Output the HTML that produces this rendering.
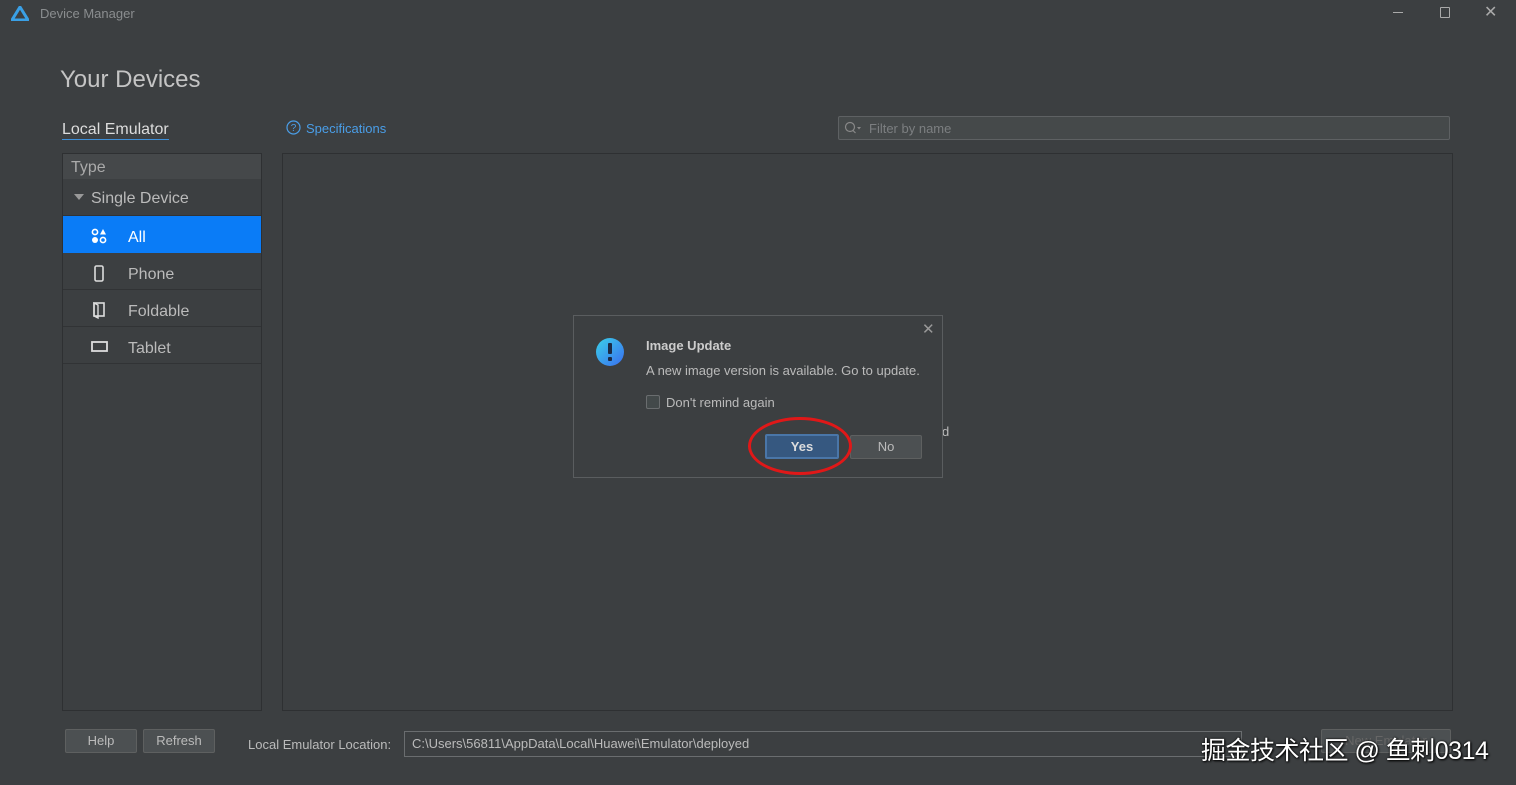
<!DOCTYPE html>
<html><head><meta charset="utf-8"><style>
*{box-sizing:border-box;margin:0;padding:0}
body{width:1516px;height:785px;background:#3c3f41;font-family:"Liberation Sans","Noto Sans CJK SC",sans-serif;position:relative;overflow:hidden;color:#bbb}
.a{position:absolute}
.row{position:absolute;left:63px;width:198px;height:37px;border-bottom:1px solid #313335;font-size:16px;color:#bbb}
.row span{position:absolute;left:65px;top:13px}
.row svg{position:absolute;left:28px;top:12px}
.btn{position:absolute;height:24px;border:1px solid #5e6060;background:#4c5052;border-radius:2px;font-size:13px;color:#bbb;text-align:center;line-height:22px}
</style></head><body>
<svg class="a" style="left:11px;top:6px" width="18" height="15" viewBox="0 0 18 15"><path d="M9 1 L17 14 H1 Z" fill="none" stroke="#3aa0e6" stroke-width="3"/></svg>
<div class="a" style="left:40px;top:6px;font-size:13px;color:#8a8d8f">Device Manager</div>
<div class="a" style="left:1393px;top:12px;width:10px;height:1px;background:#aaa"></div>
<div class="a" style="left:1440px;top:7px;width:10px;height:11px;border:1px solid #aaa;border-radius:1px"></div>
<div class="a" style="left:1484px;top:2px;font-size:16px;color:#aaa">✕</div>

<div class="a" style="left:60px;top:66px;font-size:24px;color:#c4c4c4">Your Devices</div>
<div class="a" style="left:62px;top:121px;font-size:16px;color:#ddd;border-bottom:1px solid #3d8fd9;padding-bottom:0px">Local Emulator</div>
<svg class="a" style="left:286px;top:120px" width="15" height="15" viewBox="0 0 15 15"><circle cx="7.5" cy="7.5" r="6.5" fill="none" stroke="#4a9ee8" stroke-width="1.2"/><text x="7.5" y="11" font-size="10" text-anchor="middle" fill="#4a9ee8" font-family="Liberation Sans">?</text></svg>
<div class="a" style="left:306px;top:121px;font-size:13px;color:#4a9ee8">Specifications</div>

<div class="a" style="left:838px;top:116px;width:612px;height:24px;border:1px solid #5e6163;background:#45494a;border-radius:2px"></div>
<svg class="a" style="left:844px;top:121px" width="18" height="14" viewBox="0 0 18 14"><circle cx="6" cy="6" r="4.5" fill="none" stroke="#888" stroke-width="1.2"/><path d="M9 9.5 L11.5 12" stroke="#888" stroke-width="1.2"/><path d="M13 6 L17 6 L15 8.5Z" fill="#888"/></svg>
<div class="a" style="left:869px;top:121px;font-size:13px;color:#7c7f81">Filter by name</div>

<div class="a" style="left:62px;top:153px;width:200px;height:558px;border:1px solid #2e3032"></div>
<div class="a" style="left:63px;top:154px;width:198px;height:25px;background:#45484a;font-size:16px;color:#aaa;padding:5px 0 0 8px">Type</div>
<div class="row" style="top:179px"><svg style="left:11px;top:15px" width="10" height="7"><path d="M0 0H10L5 6Z" fill="#999"/></svg><span style="left:28px;top:11px">Single Device</span></div>
<div class="row" style="top:216px;background:#0a7cf7;border:none;color:#fff"><svg width="16" height="16" viewBox="0 0 16 16"><circle cx="4" cy="4" r="2.6" fill="none" stroke="#fff" stroke-width="1.6"/><path d="M12 1 L15 6.5H9Z" fill="#fff"/><circle cx="4" cy="12" r="3" fill="#fff"/><circle cx="12" cy="12" r="2.6" fill="none" stroke="#fff" stroke-width="1.6"/></svg><span style="color:#fff">All</span></div>
<div class="row" style="top:253px"><svg width="16" height="18" viewBox="0 0 16 18"><rect x="4" y="1" width="8" height="15" rx="1.5" fill="none" stroke="#ddd" stroke-width="1.6"/></svg><span>Phone</span></div>
<div class="row" style="top:290px"><svg width="16" height="18" viewBox="0 0 16 18"><rect x="3" y="1" width="10" height="13" fill="none" stroke="#ddd" stroke-width="1.6"/><path d="M3 1 L7 3 V16 L3 14Z" fill="none" stroke="#ddd" stroke-width="1.4"/></svg><span>Foldable</span></div>
<div class="row" style="top:327px"><svg width="18" height="16" viewBox="0 0 18 16"><rect x="1" y="3" width="15" height="9" fill="none" stroke="#ddd" stroke-width="1.8"/></svg><span>Tablet</span></div>

<div class="a" style="left:282px;top:153px;width:1171px;height:558px;border:1px solid #2e3032"></div>
<div class="a" style="left:942px;top:424px;font-size:13px;color:#bbb">d</div>

<div class="a" style="left:573px;top:315px;width:370px;height:163px;border:1px solid #5a5d5f;background:#3c3f41"></div>
<div class="a" style="left:922px;top:320px;font-size:15px;color:#999">✕</div>
<div class="a" style="left:596px;top:338px;width:28px;height:28px;border-radius:50%;background:linear-gradient(135deg,#3ad0e8,#3a6ef0)"></div>
<div class="a" style="left:608px;top:343px;width:4px;height:11px;background:#1c2a44;border-radius:1px"></div>
<div class="a" style="left:608px;top:357px;width:4px;height:4px;background:#1c2a44;border-radius:1px"></div>
<div class="a" style="left:646px;top:338px;font-size:13px;font-weight:bold;color:#ccc">Image Update</div>
<div class="a" style="left:646px;top:363px;font-size:13px;color:#bbb">A new image version is available. Go to update.</div>
<div class="a" style="left:646px;top:395px;width:14px;height:14px;border:1px solid #6a6d6f;background:#43494a;border-radius:2px"></div>
<div class="a" style="left:666px;top:395px;font-size:13px;color:#bbb">Don't remind again</div>
<div class="btn" style="left:765px;top:434px;width:74px;height:25px;background:#365880;border:2px solid #4a76a8;color:#ddd;font-weight:bold">Yes</div>
<div class="btn" style="left:850px;top:435px;width:72px;height:24px">No</div>
<div class="a" style="left:748px;top:417px;width:104px;height:58px;border:3px solid #e01818;border-radius:50%"></div>

<div class="btn" style="left:65px;top:729px;width:72px">Help</div>
<div class="btn" style="left:143px;top:729px;width:72px">Refresh</div>
<div class="a" style="left:248px;top:737px;font-size:13px;color:#bbb">Local Emulator Location:</div>
<div class="a" style="left:404px;top:731px;width:838px;height:26px;border:1px solid #6a6d6f;font-size:13px;color:#bbb;padding:4px 0 0 7px">C:\Users\56811\AppData\Local\Huawei\Emulator\deployed</div>
<div class="btn" style="left:1321px;top:729px;width:130px;color:#666">New Emulator</div>
<div class="a" style="left:1201px;top:731px;font-size:25px;letter-spacing:-0.5px;color:#fff;text-shadow:0 0 2px #000,1px 1px 2px #000">掘金技术社区 @ 鱼刺0314</div>
</body></html>
